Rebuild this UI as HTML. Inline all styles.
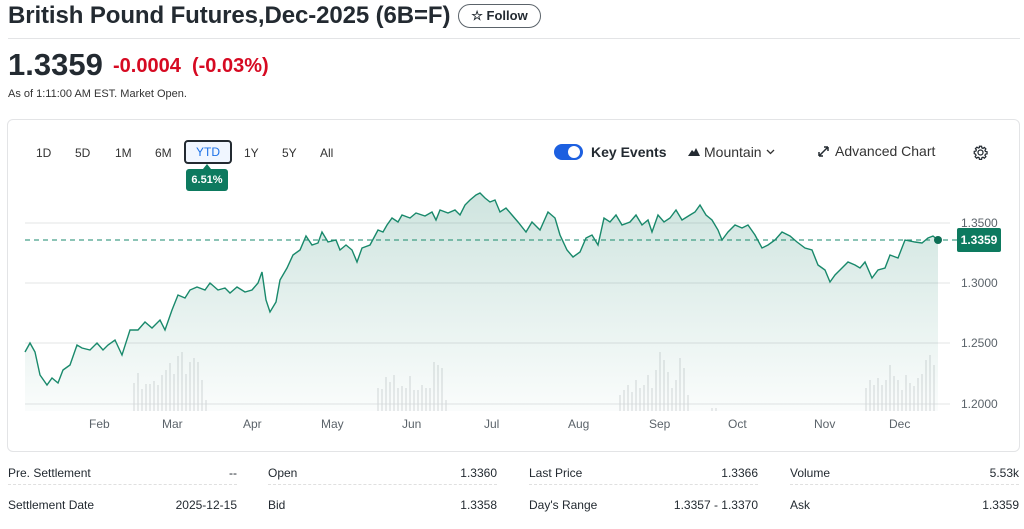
<!DOCTYPE html>
<html><head><meta charset="utf-8"><style>
*{margin:0;padding:0;box-sizing:border-box}
body{width:1024px;height:529px;overflow:hidden;background:#fff;font-family:"Liberation Sans",Arial,sans-serif;color:#232a31;position:relative}
.a{position:absolute;white-space:nowrap}
.lbl{font-size:12px;color:#333}
.dt{position:absolute;font-size:12px;color:#232a31}
.dl{position:absolute;height:0;border-top:1px dashed #e0e0e0}
</style></head><body>
<div class="a" style="left:8px;top:2px;font-size:24px;font-weight:bold;letter-spacing:-0.1px">British Pound Futures,Dec-2025 (6B=F)</div>
<div class="a" style="left:458px;top:4px;width:83px;height:24px;border:1px solid #5b636a;border-radius:13px;font-size:13px;font-weight:bold;line-height:22px;text-align:center;color:#232a31">☆ Follow</div>
<div class="a" style="left:8px;top:38px;width:1012px;height:1px;background:#e3e4e6"></div>
<div class="a" style="left:8px;top:47px;font-size:31px;font-weight:bold">1.3359</div>
<div class="a" style="left:113px;top:55px;font-size:20px;font-weight:bold;color:#d60a22">-0.0004&nbsp; (-0.03%)</div>
<div class="a" style="left:8px;top:88px;font-size:11px;color:#333">As of 1:11:00 AM EST. Market Open.</div>

<div class="a" style="left:7px;top:119px;width:1013px;height:333px;border:1px solid #e3e4e6;border-radius:6px"></div>
<div class="a lbl" style="left:36px;top:146px">1D</div>
<div class="a lbl" style="left:75px;top:146px">5D</div>
<div class="a lbl" style="left:115px;top:146px">1M</div>
<div class="a lbl" style="left:155px;top:146px">6M</div>
<div class="a" style="left:184px;top:140px;width:48px;height:24px;border:2px solid #232a31;border-radius:4px;background:#f0f6ff;font-size:12px;color:#1d72e8;text-align:center;line-height:20px">YTD</div>
<div class="a lbl" style="left:244px;top:146px">1Y</div>
<div class="a lbl" style="left:282px;top:146px">5Y</div>
<div class="a lbl" style="left:320px;top:146px">All</div>
<div class="a" style="left:203px;top:164px;width:0;height:0;border-left:4px solid transparent;border-right:4px solid transparent;border-bottom:5px solid #0d7a5f"></div>
<div class="a" style="left:186px;top:169px;width:42px;height:22px;background:#0d7a5f;border-radius:3px;color:#fff;font-size:11px;font-weight:bold;text-align:center;line-height:22px">6.51%</div>

<div class="a" style="left:554px;top:144px;width:29px;height:16px;border-radius:8px;background:#1d60e0"></div>
<div class="a" style="left:568px;top:146px;width:12px;height:12px;border-radius:6px;background:#fff"></div>
<div class="a" style="left:591px;top:144px;font-size:14px;font-weight:bold">Key Events</div>
<svg class="a" style="left:688px;top:147px" width="12" height="10"><path d="M0 9 L4 3 L6 5 L8 1 L12 9Z" fill="#232a31"/></svg>
<div class="a" style="left:704px;top:144px;font-size:14px;color:#333">Mountain</div>
<svg class="a" style="left:766px;top:149px" width="9" height="6"><path d="M1 1 L4.5 4.5 L8 1" stroke="#333" stroke-width="1.3" fill="none"/></svg>
<svg class="a" style="left:817px;top:145px" width="13" height="13"><path d="M2 11 L11 2 M2 11 L2 7 M2 11 L6 11 M11 2 L7 2 M11 2 L11 6" stroke="#232a31" stroke-width="1.5" fill="none"/></svg>
<div class="a" style="left:835px;top:143px;font-size:14px;color:#333">Advanced Chart</div>
<svg class="a" style="left:973px;top:145px" width="15" height="15" viewBox="0 0 24 24"><path d="M12 8a4 4 0 1 0 0 8a4 4 0 1 0 0-8zM10.3 2h3.4l.5 2.6 1.8.8 2.2-1.5 2.4 2.4-1.5 2.2.8 1.8 2.6.5v3.4l-2.6.5-.8 1.8 1.5 2.2-2.4 2.4-2.2-1.5-1.8.8-.5 2.6h-3.4l-.5-2.6-1.8-.8-2.200 1.5-2.4-2.4 1.5-2.2-.8-1.8L2 13.7v-3.4l2.6-.5.8-1.8-1.5-2.2 2.4-2.4 2.2 1.5 1.8-.8z" fill="none" stroke="#232a31" stroke-width="2"/></svg>

<svg class="a" style="left:0;top:0" width="1024" height="529">
<defs><linearGradient id="g" x1="0" y1="0" x2="0" y2="1"><stop offset="0" stop-color="#0d7a5f" stop-opacity="0.2"/><stop offset="1" stop-color="#0d7a5f" stop-opacity="0.02"/></linearGradient></defs>
<g stroke="#e3e4e6" stroke-width="1"><line x1="25" y1="223" x2="950" y2="223"/><line x1="25" y1="283" x2="950" y2="283"/><line x1="25" y1="343" x2="950" y2="343"/><line x1="25" y1="404" x2="950" y2="404"/></g>
<g stroke="#d6d8da" stroke-width="1">
<path d="M134 411V383M138 411V373M142 411V389M146 411V384M150 411V384M154 411V381M158 411V385M162 411V375M166 411V370M170 411V363M174 411V374M178 411V356M182 411V352M186 411V374M190 411V362M194 411V358M198 411V362M202 411V380M206 411V400"/>
<path d="M378 411V388M382 411V389M386 411V377M390 411V382M394 411V375M398 411V388M402 411V386M406 411V388M410 411V376M414 411V390M418 411V390M422 411V385M426 411V388M430 411V388M434 411V362M438 411V365M442 411V368M446 411V400"/>
<path d="M620 411V395M624 411V390M628 411V385M632 411V392M636 411V380M640 411V388M644 411V385M648 411V375M652 411V388M656 411V370M660 411V352M664 411V360M668 411V372M672 411V388M676 411V380M680 411V358M684 411V368M688 411V395M712 411V408M716 411V408"/>
<path d="M866 411V388M870 411V380M874 411V385M878 411V378M882 411V385M886 411V380M890 411V365M894 411V376M898 411V380M902 411V390M906 411V375M910 411V383M914 411V386M918 411V378M922 411V374M926 411V360M930 411V355M934 411V365"/>
</g>
<path d="M25 352L30 343L35 352L40 375L47 385L52 378L58 383L63 370L70 365L77 345L82 348L90 350L97 343L103 350L108 345L115 340L122 355L130 330L138 330L145 322L152 328L160 320L165 330L172 310L178 295L185 298L190 290L197 287L205 290L210 283L218 290L225 288L230 293L237 287L245 292L252 290L258 283L262 272L266 300L270 312L276 302L280 280L287 268L293 255L300 250L306 236L312 245L318 243L322 232L328 242L336 240L340 250L346 245L352 250L357 262L362 248L370 245L378 230L383 232L387 225L392 218L398 222L402 215L410 218L416 213L425 216L432 212L436 220L440 210L448 213L455 210L460 215L465 205L470 200L476 195L480 193L485 198L490 202L495 200L500 212L506 208L512 215L518 222L526 232L532 222L540 230L548 212L555 218L560 235L567 250L573 257L580 252L586 238L592 235L598 245L604 218L610 222L616 215L622 225L630 222L636 215L642 225L648 220L652 232L658 215L664 222L670 218L676 210L682 220L690 215L695 212L700 205L706 215L712 220L718 230L722 240L728 232L735 225L742 228L748 225L755 235L762 248L768 245L775 240L782 232L790 236L797 242L805 248L812 250L818 265L825 270L830 282L835 275L840 270L848 262L855 265L860 268L865 262L872 278L878 270L885 268L890 255L898 258L905 240L915 242L922 243L928 238L933 236L938 240" fill="none" stroke="#1a8a6c" stroke-width="1.4"/>
<path d="M25 352L30 343L35 352L40 375L47 385L52 378L58 383L63 370L70 365L77 345L82 348L90 350L97 343L103 350L108 345L115 340L122 355L130 330L138 330L145 322L152 328L160 320L165 330L172 310L178 295L185 298L190 290L197 287L205 290L210 283L218 290L225 288L230 293L237 287L245 292L252 290L258 283L262 272L266 300L270 312L276 302L280 280L287 268L293 255L300 250L306 236L312 245L318 243L322 232L328 242L336 240L340 250L346 245L352 250L357 262L362 248L370 245L378 230L383 232L387 225L392 218L398 222L402 215L410 218L416 213L425 216L432 212L436 220L440 210L448 213L455 210L460 215L465 205L470 200L476 195L480 193L485 198L490 202L495 200L500 212L506 208L512 215L518 222L526 232L532 222L540 230L548 212L555 218L560 235L567 250L573 257L580 252L586 238L592 235L598 245L604 218L610 222L616 215L622 225L630 222L636 215L642 225L648 220L652 232L658 215L664 222L670 218L676 210L682 220L690 215L695 212L700 205L706 215L712 220L718 230L722 240L728 232L735 225L742 228L748 225L755 235L762 248L768 245L775 240L782 232L790 236L797 242L805 248L812 250L818 265L825 270L830 282L835 275L840 270L848 262L855 265L860 268L865 262L872 278L878 270L885 268L890 255L898 258L905 240L915 242L922 243L928 238L933 236L938 240L938 411L25 411Z" fill="url(#g)"/>
<line x1="25" y1="240" x2="958" y2="240" stroke="#1a8a6c" stroke-width="1" stroke-dasharray="5,4"/>
<circle cx="938" cy="240" r="4" fill="#0d6e55"/>
<g font-size="12" fill="#5b636a" font-family="Liberation Sans, sans-serif">
<text x="961" y="227">1.3500</text><text x="961" y="287">1.3000</text><text x="961" y="347">1.2500</text><text x="961" y="408">1.2000</text>
<text x="89" y="428">Feb</text><text x="162" y="428">Mar</text><text x="243" y="428">Apr</text><text x="321" y="428">May</text><text x="402" y="428">Jun</text><text x="484" y="428">Jul</text><text x="568" y="428">Aug</text><text x="649" y="428">Sep</text><text x="728" y="428">Oct</text><text x="814" y="428">Nov</text><text x="889" y="428">Dec</text>
</g>
<rect x="957" y="228" width="44" height="24" rx="2" fill="#0d7a5f"/>
<text x="979" y="244" font-size="12" font-weight="bold" fill="#fff" text-anchor="middle" font-family="Liberation Sans, sans-serif">1.3359</text>
</svg>

<div class="dt" style="left:8px;top:466px">Pre. Settlement</div><div class="dt" style="left:200px;top:466px;width:37px;text-align:right">--</div>
<div class="dt" style="left:8px;top:498px">Settlement Date</div><div class="dt" style="left:150px;top:498px;width:87px;text-align:right">2025-12-15</div>
<div class="dl" style="left:8px;top:484px;width:229px"></div>
<div class="dt" style="left:268px;top:466px">Open</div><div class="dt" style="left:400px;top:466px;width:97px;text-align:right">1.3360</div>
<div class="dt" style="left:268px;top:498px">Bid</div><div class="dt" style="left:400px;top:498px;width:97px;text-align:right">1.3358</div>
<div class="dl" style="left:268px;top:484px;width:229px"></div>
<div class="dt" style="left:529px;top:466px">Last Price</div><div class="dt" style="left:660px;top:466px;width:98px;text-align:right">1.3366</div>
<div class="dt" style="left:529px;top:498px">Day's Range</div><div class="dt" style="left:640px;top:498px;width:118px;text-align:right">1.3357 - 1.3370</div>
<div class="dl" style="left:529px;top:484px;width:229px"></div>
<div class="dt" style="left:790px;top:466px">Volume</div><div class="dt" style="left:920px;top:466px;width:99px;text-align:right">5.53k</div>
<div class="dt" style="left:790px;top:498px">Ask</div><div class="dt" style="left:920px;top:498px;width:99px;text-align:right">1.3359</div>
<div class="dl" style="left:790px;top:484px;width:229px"></div>
</body></html>
